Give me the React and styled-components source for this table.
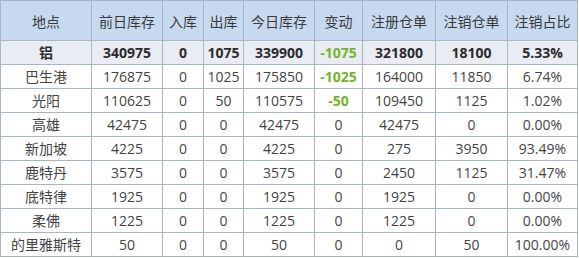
import React from "react"
import styled, { createGlobalStyle } from "styled-components"

const GlobalStyle = createGlobalStyle`
  html, body {
    margin: 0;
    padding: 0;
    background: #ffffff;
  }
  body {
    font-family: "Open Sans", "Noto Sans CJK SC", sans-serif;
  }
`

const Table = styled.table`
  width: 577px;
  border-collapse: collapse;
  table-layout: fixed;
  font-size: 14px;
  color: #3a3a3a;
`

const HeadCell = styled.th`
  height: 39px;
  padding: 0;
  background: #c6d9ef;
  border: 1px solid #a7b6c6;
  font-weight: normal;
  text-align: center;
  color: #3a3a3a;
  white-space: nowrap;
`

const Row = styled.tr`
  background: ${(p) => (p.$total ? "#e9edf3" : "#ffffff")};
  font-weight: ${(p) => (p.$total ? "bold" : "normal")};
  color: ${(p) => (p.$total ? "#2c2c2c" : "#444444")};
`

const Cell = styled.td`
  height: 23px;
  padding: 0;
  border: 1px solid #a7b6c6;
  text-align: center;
  white-space: nowrap;
  line-height: 23px;
`

const Change = styled.span`
  color: ${(p) => (p.$down ? "#72b52a" : "inherit")};
  font-weight: ${(p) => (p.$down ? "bold" : "inherit")};
`

const columns = [
  { title: "地点", width: 91 },
  { title: "前日库存", width: 71 },
  { title: "入库", width: 41 },
  { title: "出库", width: 40 },
  { title: "今日库存", width: 71 },
  { title: "变动", width: 48 },
  { title: "注册仓单", width: 73 },
  { title: "注销仓单", width: 72 },
  { title: "注销占比", width: 70 },
]

const rows = [
  ["铝", "340975", "0", "1075", "339900", "-1075", "321800", "18100", "5.33%"],
  ["巴生港", "176875", "0", "1025", "175850", "-1025", "164000", "11850", "6.74%"],
  ["光阳", "110625", "0", "50", "110575", "-50", "109450", "1125", "1.02%"],
  ["高雄", "42475", "0", "0", "42475", "0", "42475", "0", "0.00%"],
  ["新加坡", "4225", "0", "0", "4225", "0", "275", "3950", "93.49%"],
  ["鹿特丹", "3575", "0", "0", "3575", "0", "2450", "1125", "31.47%"],
  ["底特律", "1925", "0", "0", "1925", "0", "1925", "0", "0.00%"],
  ["柔佛", "1225", "0", "0", "1225", "0", "1225", "0", "0.00%"],
  ["的里雅斯特", "50", "0", "0", "50", "0", "0", "50", "100.00%"],
]

export default function App() {
  return (
    <>
      <GlobalStyle />
      <Table>
        <colgroup>
          {columns.map((c) => (
            <col key={c.title} style={{ width: c.width }} />
          ))}
        </colgroup>
        <thead>
          <tr>
            {columns.map((c) => (
              <HeadCell key={c.title}>{c.title}</HeadCell>
            ))}
          </tr>
        </thead>
        <tbody>
          {rows.map((r, i) => (
            <Row key={r[0]} $total={i === 0}>
              {r.map((v, j) => (
                <Cell key={j}>
                  {j === 5 ? <Change $down={v.startsWith("-")}>{v}</Change> : v}
                </Cell>
              ))}
            </Row>
          ))}
        </tbody>
      </Table>
    </>
  )
}
